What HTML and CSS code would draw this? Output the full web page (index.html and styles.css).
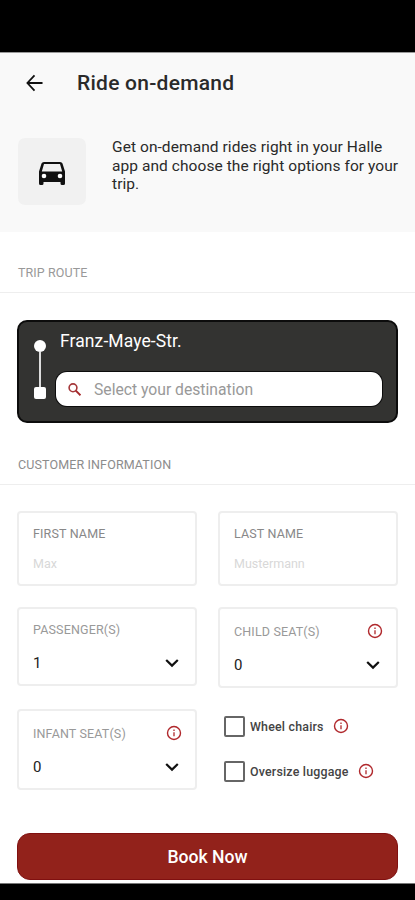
FILE: index.html
```
<!DOCTYPE html>
<html lang="en">
<head>
    <meta charset="UTF-8">
    <meta name="viewport" content="width=device-width, initial-scale=1.0">
    <title>Ride on-demand</title>
    <link rel="stylesheet" href="styles.css">
</head>
<body>

    <svg class="symbols" width="0" height="0">
        <symbol id="info" viewBox="0 0 16 16">
            <circle cx="8" cy="8" r="6.5" fill="none" stroke="#b0282c" stroke-width="1.4"/>
            <path d="M8 7.2v4M8 4.6v1.3" stroke="#b0282c" stroke-width="1.3" fill="none"/>
        </symbol>
        <symbol id="chevron" viewBox="0 0 14 10">
            <path d="M1.2 2l5.8 5.6L12.8 2" fill="none" stroke="#111" stroke-width="2.2"/>
        </symbol>
    </svg>

    <div class="header">
        <div class="title-bar">
            <svg class="back" viewBox="0 0 18 18">
                <path d="M17.5 9H2M9 1L1.5 9L9 17" fill="none" stroke="#111" stroke-width="1.9"/>
            </svg>
            <h1>Ride on-demand</h1>
        </div>
        <div class="intro">
            <div class="car-tile">
                <svg class="car" viewBox="0 0 26 23">
                    <path fill="#111" fill-rule="evenodd" d="M5 0h16q2 0 2.500 1.500L26 9.500V21.500q0 1.500-1.500 1.500h-1.500q-1.500 0-1.500-1.500V20h-17v1.500q0 1.500-1.500 1.500H1.500Q0 23 0 21.500V9.500L2.500 1.500Q3 0 5 0zM5 2L2.800 9.500h20.400L21 2z"/>
                    <circle cx="5" cy="14" r="2.300" fill="#fff"/>
                    <circle cx="21" cy="14" r="2.300" fill="#fff"/>
                </svg>
            </div>
            <p>Get on-demand rides right in your Halle<br>app and choose the right options for your<br>trip.</p>
        </div>
    </div>

    <h2 class="section-title">TRIP ROUTE</h2>

    <div class="route">
        <div class="route-line">
            <span class="dot"></span>
            <span class="line"></span>
            <span class="square"></span>
        </div>
        <div class="route-stops">
            <div class="origin">Franz-Maye-Str.</div>
            <div class="destination">
                <svg class="search" viewBox="0 0 13 13">
                    <circle cx="5" cy="4.800" r="3.900" fill="none" stroke="#a5383a" stroke-width="1.600"/>
                    <path d="M7.800 7.600L12.500 12.300" stroke="#a5282a" stroke-width="2"/>
                </svg>
                <span>Select your destination</span>
            </div>
        </div>
    </div>

    <h2 class="section-title customer">CUSTOMER INFORMATION</h2>

    <div class="form">
        <div class="column">
            <div class="field name">
                <div class="label first">FIRST NAME</div>
                <div class="placeholder">Max</div>
            </div>
            <div class="field passengers">
                <div class="label passenger">PASSENGER(S)</div>
                <div class="value">1 <svg class="chevron"><use href="#chevron"/></svg></div>
            </div>
            <div class="field seats infant">
                <div class="label">INFANT SEAT(S) <svg class="info"><use href="#info"/></svg></div>
                <div class="value">0 <svg class="chevron"><use href="#chevron"/></svg></div>
            </div>
        </div>
        <div class="column">
            <div class="field name">
                <div class="label first">LAST NAME</div>
                <div class="placeholder">Mustermann</div>
            </div>
            <div class="field seats">
                <div class="label">CHILD SEAT(S) <svg class="info"><use href="#info"/></svg></div>
                <div class="value">0 <svg class="chevron"><use href="#chevron"/></svg></div>
            </div>
            <div class="options">
                <div class="option">
                    <span class="box"></span>
                    <span>Wheel chairs</span>
                    <svg class="info"><use href="#info"/></svg>
                </div>
                <div class="option">
                    <span class="box"></span>
                    <span>Oversize luggage</span>
                    <svg class="info"><use href="#info"/></svg>
                </div>
            </div>
        </div>
    </div>

    <button class="book">Book Now</button>
    <div class="bottom-bar"></div>

</body>
</html>
```
FILE: styles.css
```
* {
    box-sizing: border-box;
}
body {
    font-family: Roboto, sans-serif;
    background-color: white;
    border-top: 52px solid black;
    margin: 0;
    height: 900px;
    display: flex;
    flex-direction: column;
    overflow: hidden;
}
.symbols {
    display: none;
}
.header {
    height: 180px;
    flex-shrink: 0;
    background-color: #f9f9f9;
    border-top: 1px solid #999;
}
.title-bar {
    display: flex;
    align-items: center;
    height: 60px;
    padding-left: 26px;
}
.back {
    width: 17px;
    height: 18px;
    margin-right: 34px;
}
.title-bar h1 {
    margin: 0;
    font-size: 21px;
    font-weight: 500;
    letter-spacing: 0.25px;
    color: #2a2a2a;
}
.intro {
    display: flex;
    padding: 25px 0 0 18px;
}
.car-tile {
    display: flex;
    align-items: center;
    justify-content: center;
    width: 68px;
    height: 67px;
    border-radius: 7px;
    background-color: #f1f1f1;
}
.car {
    width: 26px;
    height: 23px;
    margin-top: 3px;
}
.intro p {
    margin: 0 0 0 26px;
    font-size: 15.5px;
    line-height: 18.5px;
    letter-spacing: 0.07px;
    color: #2a2a2a;
    white-space: nowrap;
}
.section-title {
    flex-shrink: 0;
    height: 61px;
    margin: 0;
    padding: 32px 0 0 18px;
    border-bottom: 1px solid #eee;
    font-size: 12.5px;
    line-height: 18px;
    font-weight: 400;
    letter-spacing: 0.1px;
    color: #999;
}
.route {
    display: flex;
    flex-shrink: 0;
    height: 103px;
    margin: 27px 17px 0;
    padding: 0 14px;
    border: 2px solid #0c0c0c;
    border-radius: 10px;
    background-color: #333331;
}
.route-line {
    display: flex;
    flex-direction: column;
    align-items: center;
    width: 13px;
    padding-top: 18px;
}
.dot {
    width: 12px;
    height: 12px;
    border-radius: 50%;
    background-color: white;
}
.line {
    width: 2px;
    height: 35px;
    background-color: #ddd;
}
.square {
    width: 12px;
    height: 12px;
    border-radius: 2px;
    background-color: white;
}
.route-stops {
    flex: 1;
    padding-left: 10px;
}
.origin {
    height: 50px;
    padding: 8px 0 0 4px;
    font-size: 17.5px;
    line-height: 22px;
    letter-spacing: 0.1px;
    color: white;
}
.destination {
    display: flex;
    align-items: center;
    height: 34px;
    padding-left: 12px;
    border-radius: 11px;
    background-color: white;
    box-shadow: 0 0 0 1px #0c0c0c;
    font-size: 15.7px;
    color: #999;
}
.search {
    width: 13px;
    height: 13px;
    margin-right: 13px;
}
.section-title.customer {
    height: 62px;
    padding-top: 33px;
    letter-spacing: 0.13px;
    color: #8c8c8c;
}
.form {
    display: flex;
    flex-shrink: 0;
    gap: 21px;
    padding: 26px 17px 0 17px;
}
.column {
    flex: 1;
}
.field {
    padding: 0 13px 0 14px;
    border: 2px solid #eee;
    border-radius: 4px;
    margin-bottom: 21px;
}
.name {
    height: 75px;
}
.passengers {
    height: 79px;
    margin-bottom: 23px;
}
.seats {
    height: 81px;
}
.infant {
    margin-bottom: 0;
}
.label {
    display: flex;
    align-items: center;
    justify-content: space-between;
    height: 20px;
    margin-top: 12px;
    font-size: 12.5px;
    letter-spacing: 0.15px;
    color: #999;
}
.label.first {
    margin-top: 10px;
    color: #888;
}
.label.passenger {
    margin-top: 10px;
}
.placeholder {
    margin-top: 11px;
    font-size: 12.5px;
    line-height: 20px;
    color: #d8d8d8;
}
.value {
    display: flex;
    align-items: center;
    justify-content: space-between;
    height: 20px;
    margin-top: 14px;
    padding-right: 3px;
    font-size: 15px;
    color: #222;
}
.chevron {
    width: 14px;
    height: 10px;
}
.info {
    width: 16px;
    height: 16px;
}
.options {
    padding: 6px 0 0 6px;
}
.option {
    display: flex;
    align-items: center;
    height: 22px;
    margin-bottom: 23px;
    font-size: 12.4px;
    font-weight: 500;
    letter-spacing: 0.2px;
    color: #444;
}
.box {
    width: 21px;
    height: 21px;
    margin-right: 5px;
    border: 2px solid #666;
    border-radius: 2px;
}
.option .info {
    margin-left: 9px;
}
.book {
    flex-shrink: 0;
    height: 47px;
    margin: 28px 17px 0;
    border: 1px solid #801010;
    border-radius: 13px;
    background-color: #92221b;
    color: white;
    font-family: Roboto, sans-serif;
    font-size: 17.6px;
    font-weight: 500;
}
.bottom-bar {
    flex: 1;
    margin-top: 3px;
    border-top: 1px solid #777;
    background-color: black;
}
```
